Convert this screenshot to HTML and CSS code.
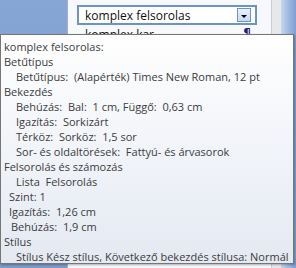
FILE: index.html
```html
<!DOCTYPE html>
<html>
  <head>
    <title>Stílus tipp</title>
    <link rel="stylesheet" href="styles.css">
  </head>
  <body>
    <div class="screen">
      <div class="side"></div>
      <div class="panel">
        <div class="combo">
          <span class="combo-text">komplex felsorolas</span>
          <span class="combo-btn"><span class="arrow"></span></span>
        </div>
        <div class="style-row">
          <span>komplex kar</span>
          <span class="mark">¶</span>
        </div>
      </div>
      <div class="strip"></div>
      <div class="edge"></div>

      <div class="tip">
        <div>komplex felsorolas:</div>
        <div>Betűtípus</div>
        <div class="l1">Betűtípus:&nbsp; (Alapérték) Times New Roman, 12 pt</div>
        <div>Bekezdés</div>
        <div class="l1">Behúzás:&nbsp; Bal:&nbsp; 1 cm, Függő:&nbsp; 0,63 cm</div>
        <div class="l1">Igazítás:&nbsp; Sorkizárt</div>
        <div class="l1">Térköz:&nbsp; Sorköz:&nbsp; 1,5 sor</div>
        <div class="l1">Sor- és oldaltörések:&nbsp; Fattyú- és árvasorok</div>
        <div>Felsorolás és számozás</div>
        <div class="l1">Lista&nbsp; Felsorolás</div>
        <div class="l2">Szint: 1</div>
        <div class="l2">Igazítás:&nbsp; 1,26 cm</div>
        <div class="l2 shift">Behúzás:&nbsp; 1,9 cm</div>
        <div>Stílus</div>
        <div class="l1">Stílus Kész stílus, Következő bekezdés stílusa: Normál</div>
      </div>
    </div>
  </body>
</html>
```

FILE: styles.css
```css
body {
  margin: 0;
  font-family: "Open Sans", "Noto Sans", sans-serif;
}

.screen {
  position: relative;
  width: 296px;
  height: 268px;
  overflow: hidden;
  display: flex;
  background-color: #7d97c2;
}

.side {
  width: 67px;
  background: linear-gradient(to bottom, #86a6d6, #7e9acb);
}

.panel {
  width: 204px;
  background-color: #f7f8fb;
  border-left: 1px solid #9db2d2;
  padding: 5px 0 0 9px;
  box-sizing: border-box;
}

.combo {
  width: 180px;
  height: 20px;
  box-sizing: border-box;
  border: 2px solid #6b93c7;
  background-color: #fff;
  display: flex;
  align-items: center;
  justify-content: space-between;
  padding: 0 4px 0 6px;
  font-size: 12px;
  color: #111;
}

.combo-btn {
  width: 12px;
  height: 12px;
  border: 1px solid #6b93c7;
  background: linear-gradient(to bottom, #eaf1fb, #c8daf1);
  display: flex;
  align-items: center;
  justify-content: center;
}

.arrow {
  width: 0;
  height: 0;
  margin-top: 3px;
  border-left: 3px solid transparent;
  border-right: 3px solid transparent;
  border-top: 3px solid #000;
}

.style-row {
  width: 180px;
  display: flex;
  justify-content: space-between;
  padding: 1px 6px 0 8px;
  box-sizing: border-box;
  font-size: 12px;
  color: #111;
}

.mark {
  color: #14207a;
  font-weight: bold;
  font-family: "DejaVu Sans", sans-serif;
}

.strip {
  width: 9px;
  background-color: #e6e8ec;
  border-left: 1px solid #c9ced6;
}

.edge {
  flex: 1;
  background: linear-gradient(to right, #c9d7ec, #a6bee2 40%, #7f9fd2);
}

.tip {
  position: absolute;
  left: 0;
  top: 34px;
  width: 294px;
  height: 230px;
  box-sizing: border-box;
  border: 1px solid #767676;
  background: linear-gradient(to bottom, #ffffff, #e4e9f2);
  padding: 4px 0 0 3px;
  font-size: 11px;
  line-height: 15px;
  color: #3c3c3c;
  white-space: nowrap;
  box-shadow: 1px 1px 2px rgba(0, 0, 0, 0.3);
}

.l1 {
  padding-left: 12px;
}

.l2 {
  padding-left: 5px;
}

.shift {
  padding-left: 7px;
}
```
